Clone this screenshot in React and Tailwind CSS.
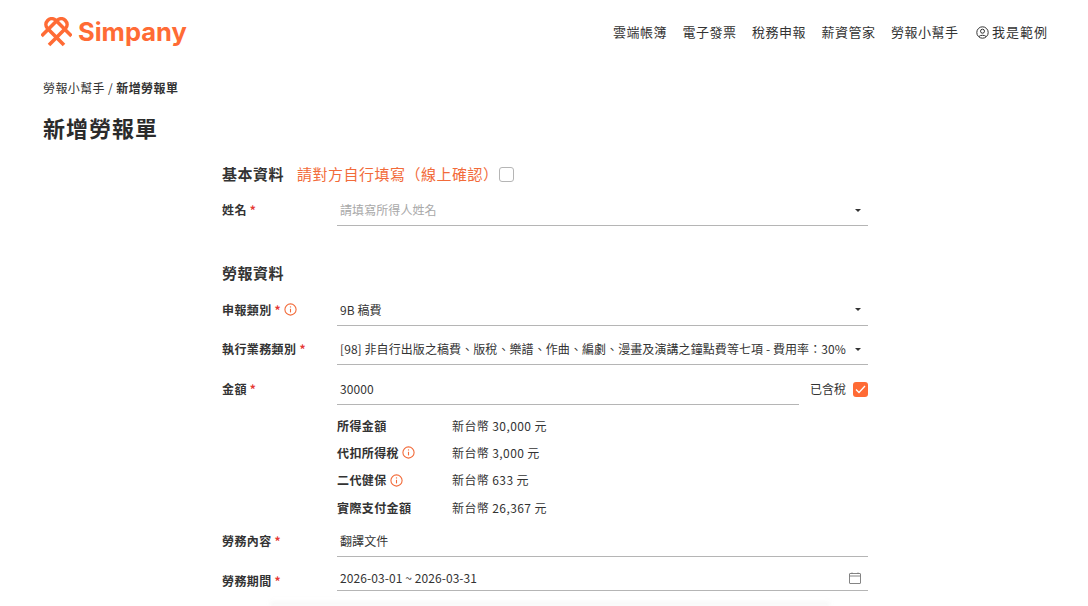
const CJK = "font-['Noto_Sans_CJK_TC','Noto_Sans',sans-serif]";

function Caret() {
  return (
    <svg width="6" height="3" viewBox="0 0 6 3" className="shrink-0 mr-[5px]">
      <path d="M0 0h6L3 3z" fill="#333" />
    </svg>
  );
}

function Info() {
  return (
    <svg width="13" height="13" viewBox="0 0 13 13" fill="none" className="shrink-0">
      <circle cx="6.5" cy="6.5" r="5.6" stroke="#f26b3a" strokeWidth="1.1" />
      <path d="M6.5 5.8v3.6" stroke="#f26b3a" strokeWidth="1.1" />
      <circle cx="6.5" cy="3.9" r="0.7" fill="#f26b3a" />
    </svg>
  );
}

function Logo() {
  return (
    <svg width="31" height="30" viewBox="0 0 31 30" fill="none" stroke="#ff6b35" strokeWidth="3.6">
      <path d="M8 28 L24.45 11.5 A5.8 5.8 0 0 0 16.25 3.3 L0.5 19" />
      <path d="M23 28 L6.55 11.5 A5.8 5.8 0 0 1 14.75 3.3 L30.5 19" />
    </svg>
  );
}

function Label({ children, info, className = '' }) {
  return (
    <div className={`w-[115px] shrink-0 flex items-center gap-[3px] pb-[2px] text-xs font-semibold tracking-[0.4px] text-[#333] ${className}`}>
      <span>{children}</span>
      <span className="font-bold text-[#e53935]">*</span>
      {info && <Info />}
    </div>
  );
}

function Field({ children, icon, className = '' }) {
  return (
    <div className={`flex-1 h-[31px] flex items-center justify-between pl-[3px] pr-[2px] border-b border-[#b5b5b5] text-xs tracking-[0.08px] text-[#333] ${className}`}>
      {children}
      {icon}
    </div>
  );
}

function Row({ label, info, children, mt, labelClass }) {
  return (
    <div className={`flex items-center ${mt}`}>
      <Label info={info} className={labelClass}>{label}</Label>
      {children}
    </div>
  );
}

function Amount({ label, info, value }) {
  return (
    <div className="flex items-center h-[27.3px] text-xs tracking-[0.4px] text-[#333]">
      <div className="w-[115px] flex items-center gap-[3px] font-semibold">
        <span>{label}</span>
        {info && <Info />}
      </div>
      <span>{value}</span>
    </div>
  );
}

export default function App() {
  const nav = ['雲端帳簿', '電子發票', '稅務申報', '薪資管家', '勞報小幫手'];

  return (
    <div className={`relative h-[606px] overflow-hidden bg-white text-[#333] ${CJK}`}>
      <header className="flex items-center justify-between pl-[41px] pr-[40px] h-[64px]">
        <div className="flex items-center gap-[6px]">
          <Logo />
          <span className="font-['Inter',sans-serif] text-[25.5px] font-bold text-[#ff6b35] leading-none">Simpany</span>
        </div>
        <nav className="flex items-center gap-[15.5px] text-[13px] tracking-[0.5px] text-[#333]">
          {nav.map((n) => (
            <span key={n}>{n}</span>
          ))}
          <span className="ml-[2px] flex items-center gap-[3px] tracking-[1px]">
            <svg width="13" height="13" viewBox="0 0 13 13" fill="none" stroke="#333" strokeWidth="1">
              <circle cx="6.5" cy="6.5" r="5.7" />
              <circle cx="6.5" cy="5.2" r="2" />
              <path d="M3 10.5c1-1.6 6-1.6 7 0" />
            </svg>
            我是範例
          </span>
        </nav>
      </header>

      <div className="px-[43px] pt-[15px]">
        <div className="text-xs tracking-[0.4px] leading-[18px]">
          勞報小幫手 / <span className="font-semibold">新增勞報單</span>
        </div>
        <h1 className="mt-[15px] text-[22px] font-bold tracking-[1px] leading-[30px] text-[#2b2b2b]">新增勞報單</h1>
      </div>

      <main className="w-[646px] ml-[222px] mt-[22px]">
        <div className="flex items-center h-[20px] text-[15px] tracking-[0.5px]">
          <span className="font-semibold">基本資料</span>
          <span className="ml-[13px] text-[#f26b3a]">請對方自行填寫（線上確認）</span>
          <span className="w-[15px] h-[15px] rounded-[3px] border border-[#b5b5b5]" />
        </div>

        <Row label="姓名" mt="mt-[11px]">
          <Field icon={<Caret />}>
            <span className="text-[#a8a8a8]">請填寫所得人姓名</span>
          </Field>
        </Row>

        <div className="mt-[37px] h-[20px] flex items-center text-[15px] tracking-[0.5px] font-semibold">勞報資料</div>

        <Row label="申報類別" info mt="mt-[12px]">
          <Field icon={<Caret />} className="pb-[1px]">9B 稿費</Field>
        </Row>
        <Row label="執行業務類別" mt="mt-[8px]">
          <Field icon={<Caret />}>
            <span>[98] 非自行出版之稿費、版稅、樂譜、作曲、編劇、漫畫及演講之鐘點費等七項 - 費用率：30%</span>
          </Field>
        </Row>
        <Row label="金額" mt="mt-[9px]">
          <Field>30000</Field>
          <div className="ml-[11px] flex items-center gap-[7px] text-xs pb-[1px]">
            已含稅
            <span className="w-[15px] h-[15px] rounded-[3px] bg-[#ff6b35] flex items-center justify-center">
              <svg width="11" height="9" viewBox="0 0 11 9" fill="none" stroke="#fff" strokeWidth="1.3">
                <path d="M1 4.5 4 7.5 10 1" />
              </svg>
            </span>
          </div>
        </Row>

        <div className="ml-[115px] mt-[7px]">
          <Amount label="所得金額" value="新台幣 30,000 元" />
          <Amount label="代扣所得稅" info value="新台幣 3,000 元" />
          <Amount label="二代健保" info value="新台幣 633 元" />
          <Amount label="實際支付金額" value="新台幣 26,367 元" />
        </div>

        <Row label="勞務內容" mt="mt-[5px]">
          <Field>翻譯文件</Field>
        </Row>
        <Row label="勞務期間" mt="mt-[3px]" labelClass="pt-[12px]">
          <Field
            className="pt-[6px]"
            icon={
              <svg width="12" height="12" viewBox="0 0 12 12" fill="none" stroke="#777" strokeWidth="0.9" className="mr-[5px]">
                <rect x="0.5" y="1.5" width="11" height="10" rx="0.5" />
                <path d="M0.5 4h11M3 0.5v1.5M9 0.5v1.5" />
              </svg>
            }
          >
            2026-03-01 ~ 2026-03-31
          </Field>
        </Row>
      </main>

      <div className="absolute bottom-0 left-[270px] w-[560px] h-[6px] bg-gradient-to-b from-transparent to-[#f3f3f3] blur-[2px]" />
    </div>
  );
}
